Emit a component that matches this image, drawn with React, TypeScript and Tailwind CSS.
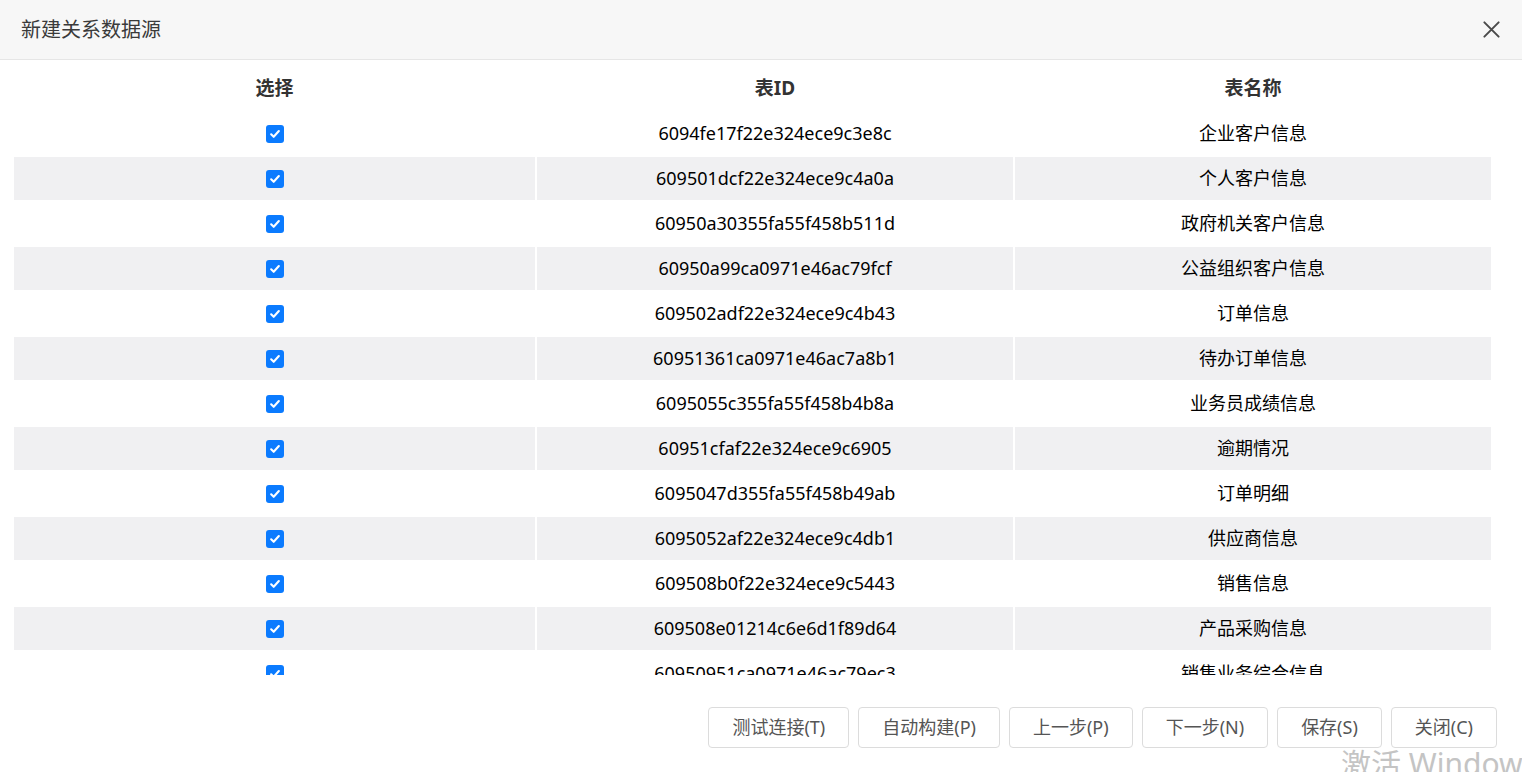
import React from "react";

type TableRow = {
  id: string;
  name: string;
};

const ROWS: TableRow[] = [
  { id: "6094fe17f22e324ece9c3e8c", name: "企业客户信息" },
  { id: "609501dcf22e324ece9c4a0a", name: "个人客户信息" },
  { id: "60950a30355fa55f458b511d", name: "政府机关客户信息" },
  { id: "60950a99ca0971e46ac79fcf", name: "公益组织客户信息" },
  { id: "609502adf22e324ece9c4b43", name: "订单信息" },
  { id: "60951361ca0971e46ac7a8b1", name: "待办订单信息" },
  { id: "6095055c355fa55f458b4b8a", name: "业务员成绩信息" },
  { id: "60951cfaf22e324ece9c6905", name: "逾期情况" },
  { id: "6095047d355fa55f458b49ab", name: "订单明细" },
  { id: "6095052af22e324ece9c4db1", name: "供应商信息" },
  { id: "609508b0f22e324ece9c5443", name: "销售信息" },
  { id: "609508e01214c6e6d1f89d64", name: "产品采购信息" },
  { id: "60950951ca0971e46ac79ec3", name: "销售业务综合信息" },
];

const BUTTONS = ["测试连接(T)", "自动构建(P)", "上一步(P)", "下一步(N)", "保存(S)", "关闭(C)"];

function CheckMark() {
  return (
    <span className="inline-flex h-[18px] w-[18px] items-center justify-center rounded-[3px] bg-[#0b7bff] align-middle">
      <svg viewBox="0 0 16 16" className="h-[14px] w-[14px]" fill="none">
        <path
          d="M3.6 8.4 6.5 11.2 12.4 4.6"
          stroke="#ffffff"
          strokeWidth="2.4"
          strokeLinecap="round"
          strokeLinejoin="round"
        />
      </svg>
    </span>
  );
}

export default function App() {
  return (
    <div
      className="relative flex h-[772px] w-[1522px] flex-col overflow-hidden bg-white"
      style={{ fontFamily: '"Noto Sans", "Noto Sans CJK SC", sans-serif' }}
    >
      {/* header */}
      <header className="flex h-[60px] shrink-0 items-center justify-between border-b border-[#e6e6e6] bg-[#f7f7f7] pl-[21px] pr-[21px]">
        <h1 className="text-[20px] font-normal text-[#3a3a3a]">新建关系数据源</h1>
        <button type="button" className="flex h-[20px] w-[20px] items-center justify-center text-[#4a4a4a]">
          <svg viewBox="0 0 20 20" className="h-[19px] w-[19px]" fill="none">
            <path d="M2.5 2.5 17.5 17.5M17.5 2.5 2.5 17.5" stroke="currentColor" strokeWidth="2.1" strokeLinecap="round" />
          </svg>
        </button>
      </header>

      {/* table */}
      <div className="h-[615px] shrink-0 overflow-hidden pl-[12px] pt-[5px]">
        <table className="w-[1481px] table-fixed border-separate border-spacing-[2px] text-center">
          <colgroup>
            <col className="w-[521px]" />
            <col className="w-[476px]" />
            <col className="w-[476px]" />
          </colgroup>
          <thead>
            <tr className="h-[43px]">
              <th className="p-0 text-[19px] font-bold text-[#333]">选择</th>
              <th className="p-0 text-[19px] font-bold text-[#333]">表ID</th>
              <th className="p-0 text-[19px] font-bold text-[#333]">表名称</th>
            </tr>
          </thead>
          <tbody>
            {ROWS.map((row, index) => {
              const bg = index % 2 === 1 ? "bg-[#f0f0f2]" : "bg-white";
              return (
                <tr key={row.id} className="h-[43px]">
                  <td className={`${bg} p-0 pb-[2px]`}>
                    <CheckMark />
                  </td>
                  <td className={`${bg} p-0 text-[18px] text-black`}>{row.id}</td>
                  <td className={`${bg} p-0 text-[18px] text-black`}>{row.name}</td>
                </tr>
              );
            })}
          </tbody>
        </table>
      </div>

      {/* footer */}
      <footer className="flex flex-1 items-start justify-end gap-[9px] pr-[25px] pt-[32px]">
        {BUTTONS.map((label) => (
          <button
            key={label}
            type="button"
            className="h-[41px] rounded-[4px] border border-[#dcdcdc] bg-white px-[23px] text-[18px] text-[#555]"
          >
            {label}
          </button>
        ))}
      </footer>

      <div className="pointer-events-none absolute left-[1341px] top-[741px] whitespace-nowrap text-[30px] text-[#c4c4c4]">
        激活 Windows
      </div>
    </div>
  );
}
